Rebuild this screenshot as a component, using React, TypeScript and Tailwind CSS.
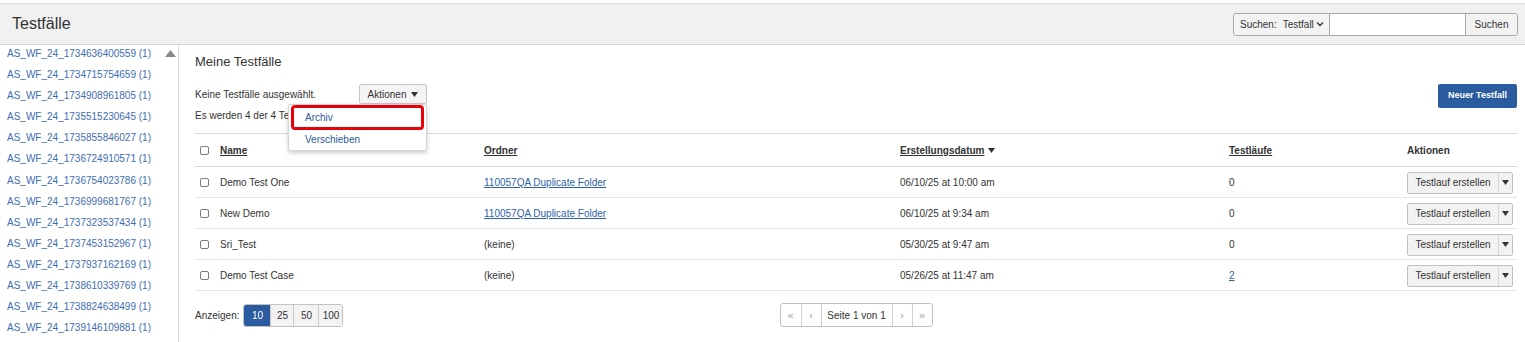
import React from "react";

const FOLDERS = [
  "AS_WF_24_1734636400559 (1)",
  "AS_WF_24_1734715754659 (1)",
  "AS_WF_24_1734908961805 (1)",
  "AS_WF_24_1735515230645 (1)",
  "AS_WF_24_1735855846027 (1)",
  "AS_WF_24_1736724910571 (1)",
  "AS_WF_24_1736754023786 (1)",
  "AS_WF_24_1736999681767 (1)",
  "AS_WF_24_1737323537434 (1)",
  "AS_WF_24_1737453152967 (1)",
  "AS_WF_24_1737937162169 (1)",
  "AS_WF_24_1738610339769 (1)",
  "AS_WF_24_1738824638499 (1)",
  "AS_WF_24_1739146109881 (1)",
];

const ROWS = [
  { name: "Demo Test One", folder: "110057QA Duplicate Folder", date: "06/10/25 at 10:00 am", runs: "0" },
  { name: "New Demo", folder: "110057QA Duplicate Folder", date: "06/10/25 at 9:34 am", runs: "0" },
  { name: "Sri_Test", folder: null, date: "05/30/25 at 9:47 am", runs: "0" },
  { name: "Demo Test Case", folder: null, date: "05/26/25 at 11:47 am", runs: "2" },
];

const cols = "grid grid-cols-[25px_264px_416px_329px_178px_1fr] items-center";

function Caret({ className = "" }: { className?: string }) {
  return (
    <svg width="7" height="5" viewBox="0 0 7 5" className={className}>
      <polygon points="0,0 7,0 3.5,5" fill="currentColor" />
    </svg>
  );
}

function Checkbox() {
  return <span className="block w-[9px] h-[9px] rounded-[2px] border border-[#7a7a7a] bg-white" />;
}

export default function App() {
  return (
    <div className="h-[342px] overflow-hidden bg-white text-[10px] text-[#333] font-['Liberation_Sans',Arial,sans-serif] pt-[3px]">
      {/* header */}
      <div className="h-[42px] bg-[#f1f1f1] border-t border-b border-t-[#dedede] border-b-[#d2d2d2] flex items-center justify-between pl-[12px] pr-[7px]">
        <h1 className="text-[16px] leading-none">Testfälle</h1>
        <div className="flex h-[23px] rounded-[3px] border border-[#a9a9a9] overflow-hidden">
          <div className="flex items-center gap-[6px] px-[6px] bg-[#f3f3f3] border-r border-[#a9a9a9] w-[96px]">
            <span>Suchen:</span>
            <span className="flex items-center gap-[2px]">
              Testfall
              <svg width="8" height="6" viewBox="0 0 8 6">
                <path d="M1 1.5 L4 4.5 L7 1.5" stroke="#333" strokeWidth="1.4" fill="none" />
              </svg>
            </span>
          </div>
          <div className="w-[135px] bg-white" />
          <button className="w-[52px] bg-[#f3f3f3] border-l border-[#a9a9a9] text-[10px] text-[#333]">Suchen</button>
        </div>
      </div>

      <div className="flex h-[297px]">
        {/* sidebar */}
        <aside className="relative w-[179px] shrink-0 border-r border-[#dcdcdc] overflow-hidden">
          <ul className="mt-[-2px]">
            {FOLDERS.map((f) => (
              <li key={f} className="h-[21.1px] leading-[21px] pl-[7px] text-[#3d6db3] whitespace-nowrap">
                {f}
              </li>
            ))}
          </ul>
          <svg width="11" height="7" viewBox="0 0 11 7" className="absolute left-[165px] top-[5px]">
            <polygon points="0,7 11,7 5.5,0" fill="#8a8a8a" />
          </svg>
        </aside>

        {/* main */}
        <main className="flex-1 pl-[16px] pr-[8px] pt-[9px]">
          <h2 className="text-[13px] leading-[16px]">Meine Testfälle</h2>

          <div className="mt-[14px] flex justify-between items-start">
            <div>
              <div className="flex items-center h-[20px]">
                <span className="w-[164px]">Keine Testfälle ausgewählt.</span>
                <div className="relative">
                  <button className="h-[20px] w-[68px] flex items-center justify-center gap-[5px] rounded-[2px] border border-[#c6c6c6] bg-[#f4f4f4] text-[10px] text-[#333]">
                    Aktionen
                    <Caret />
                  </button>
                  <div className="absolute right-0 top-[20px] w-[139px] h-[47px] bg-white border border-[#d4d4d4] rounded-[2px] shadow-[0_2px_4px_rgba(0,0,0,0.2)] z-10 flex flex-col">
                    <div className="mx-[2px] h-[25px] rounded-[4px] border-[3px] border-[#e8000b] flex items-center pl-[11px] pb-[1px] text-[#2c5b9c]">
                      Archiv
                    </div>
                    <div className="h-[18px] flex items-center pl-[16px] text-[#2c5b9c]">Verschieben</div>
                  </div>
                </div>
              </div>
              <p className="mt-[5px] leading-[14px]">Es werden 4 der 4 Testfälle angezeigt.</p>
            </div>
            <button className="h-[24px] w-[79px] rounded-[2px] bg-[#2b5c9f] text-white font-bold text-[9px]">
              Neuer Testfall
            </button>
          </div>

          {/* table */}
          <div className="mt-[10px]">
            <div className={`${cols} h-[34px] border-t border-b border-[#dadada] font-bold`}>
              <div className="pl-[5px]"><Checkbox /></div>
              <span className="underline">Name</span>
              <span className="underline">Ordner</span>
              <span className="flex items-center gap-[4px]">
                <span className="underline">Erstellungsdatum</span>
                <Caret />
              </span>
              <span className="underline">Testläufe</span>
              <span>Aktionen</span>
            </div>
            {ROWS.map((r) => (
              <div key={r.name} className={`${cols} h-[31px] border-b border-[#e6e6e6] pt-[1px]`}>
                <div className="pl-[5px]"><Checkbox /></div>
                <span>{r.name}</span>
                {r.folder ? (
                  <span className="underline text-[#2e62a8]">{r.folder}</span>
                ) : (
                  <span>(keine)</span>
                )}
                <span>{r.date}</span>
                {r.runs === "2" ? (
                  <span className="underline text-[#2e62a8]">{r.runs}</span>
                ) : (
                  <span>{r.runs}</span>
                )}
                <div className="flex h-[22px] w-[106px] rounded-[2px] border border-[#c2c2c2] bg-[#f2f2f2]">
                  <span className="w-[90px] flex items-center justify-center">Testlauf erstellen</span>
                  <span className="flex-1 flex items-center justify-center border-l border-[#d6d6d6]">
                    <Caret />
                  </span>
                </div>
              </div>
            ))}
          </div>

          {/* footer */}
          <div className="mt-[12px] grid grid-cols-[1fr_auto_1fr] items-center">
            <div className="flex items-center gap-[4px] mt-[1px]">
              <span>Anzeigen:</span>
              <div className="flex h-[23px] rounded-[3px] border border-[#c2c2c2] overflow-hidden">
                <span className="w-[26px] flex items-center justify-center bg-[#2b5c9f] text-white">10</span>
                <span className="w-[23px] flex items-center justify-center bg-[#f3f3f3] border-l border-[#c8c8c8]">25</span>
                <span className="w-[25px] flex items-center justify-center bg-[#f3f3f3] border-l border-[#c8c8c8]">50</span>
                <span className="w-[24px] flex items-center justify-center bg-[#f3f3f3] border-l border-[#c8c8c8]">100</span>
              </div>
            </div>
            <div className="flex h-[24px] rounded-[3px] border border-[#c2c2c2] overflow-hidden bg-white">
              <span className="w-[20px] flex items-center justify-center text-[#a0a0a0] text-[11px]">«</span>
              <span className="w-[20px] flex items-center justify-center text-[#a0a0a0] text-[11px] border-l border-[#d0d0d0]">‹</span>
              <span className="w-[71px] flex items-center justify-center border-l border-[#d0d0d0]">Seite 1 von 1</span>
              <span className="w-[20px] flex items-center justify-center text-[#a0a0a0] text-[11px] border-l border-[#d0d0d0]">›</span>
              <span className="w-[20px] flex items-center justify-center text-[#a0a0a0] text-[11px] border-l border-[#d0d0d0]">»</span>
            </div>
            <div />
          </div>
        </main>
      </div>
    </div>
  );
}
